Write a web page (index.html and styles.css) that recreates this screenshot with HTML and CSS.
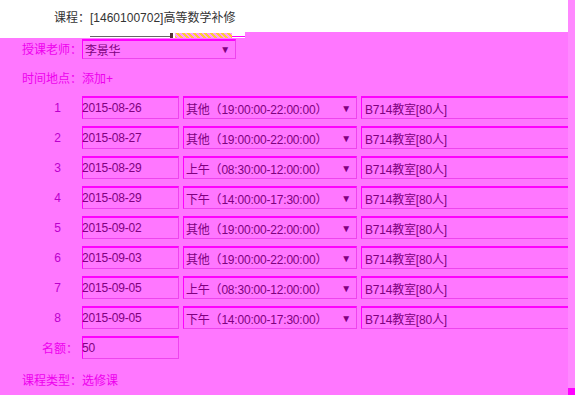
FILE: index.html
```html
<!DOCTYPE html>
<html lang="zh-CN">
<head>
  <meta charset="UTF-8">
  <title>课程</title>
  <link rel="stylesheet" href="styles.css">
</head>
<body>
  <div class="frame">
    <main class="page">
      <!-- 课程名称 -->
      <div class="course-head">课程：[1460100702]高等数学补修</div>
      <div class="head-edge">
        <div class="edge-white">
          <span class="edge-line"></span><span class="edge-icon"></span><span class="edge-check"></span><span class="edge-pink"></span>
        </div>
      </div>

      <div class="field">
        <span class="label">授课老师：</span>
        <div class="box select teacher">李景华<span class="arrow">▼</span></div>
      </div>

      <div class="field text-row">
        <span class="label">时间地点：</span><span class="link">添加+</span>
      </div>

      <div class="sessions">
        <div class="session"><span class="num">1</span><div class="box date">2015-08-26</div><div class="box select time">其他（19:00:00-22:00:00）<span class="arrow">▼</span></div><div class="box place">B714教室[80人]</div></div>
        <div class="session"><span class="num">2</span><div class="box date">2015-08-27</div><div class="box select time">其他（19:00:00-22:00:00）<span class="arrow">▼</span></div><div class="box place">B714教室[80人]</div></div>
        <div class="session"><span class="num">3</span><div class="box date">2015-08-29</div><div class="box select time">上午（08:30:00-12:00:00）<span class="arrow">▼</span></div><div class="box place">B714教室[80人]</div></div>
        <div class="session"><span class="num">4</span><div class="box date">2015-08-29</div><div class="box select time">下午（14:00:00-17:30:00）<span class="arrow">▼</span></div><div class="box place">B714教室[80人]</div></div>
        <div class="session"><span class="num">5</span><div class="box date">2015-09-02</div><div class="box select time">其他（19:00:00-22:00:00）<span class="arrow">▼</span></div><div class="box place">B714教室[80人]</div></div>
        <div class="session"><span class="num">6</span><div class="box date">2015-09-03</div><div class="box select time">其他（19:00:00-22:00:00）<span class="arrow">▼</span></div><div class="box place">B714教室[80人]</div></div>
        <div class="session"><span class="num">7</span><div class="box date">2015-09-05</div><div class="box select time">上午（08:30:00-12:00:00）<span class="arrow">▼</span></div><div class="box place">B714教室[80人]</div></div>
        <div class="session"><span class="num">8</span><div class="box date">2015-09-05</div><div class="box select time">下午（14:00:00-17:30:00）<span class="arrow">▼</span></div><div class="box place">B714教室[80人]</div></div>
        <div class="session quota"><span class="num">名额：</span><div class="box date">50</div></div>
      </div>

      <div class="field text-row last">
        <span class="label">课程类型：</span><span class="link">选修课</span>
      </div>
    </main>
    <div class="scroll-side"><span class="corner"></span></div>
  </div>
</body>
</html>
```

FILE: styles.css
```css
/* General */
body {
  margin: 0;
  padding: 0;
  font-family: "Liberation Sans", "Noto Sans CJK SC", sans-serif;
  font-size: 12px;
  background-color: #ff88ff;
  overflow: hidden;
}

.frame {
  display: flex;
  height: 395px;
}

.page {
  width: 568px;
  flex: none;
  background-color: #ff77ff;
  overflow: hidden;
}

/* Header */
.course-head {
  background-color: #fff;
  height: 32px;
  line-height: 14px;
  padding-top: 11px;
  padding-left: 54px;
  box-sizing: border-box;
  color: #333;
}

.head-edge {
  height: 6px;
}

.edge-white {
  width: 245px;
  height: 6px;
  background-color: #fff;
  display: flex;
  align-items: center;
  padding-left: 90px;
  box-sizing: border-box;
}

.edge-line {
  width: 80px;
  height: 1px;
  margin-top: 2px;
  background-color: #666;
}

.edge-icon {
  width: 3px;
  height: 5px;
  background-color: #553333;
  margin-right: 2px;
}

.edge-check {
  width: 57px;
  height: 5px;
  background: repeating-linear-gradient(45deg, #ffcc33 0 2px, #ff99ff 2px 4px);
}

.edge-pink {
  width: 13px;
  height: 1px;
  margin-top: 2px;
  background-color: #ff00ff;
}

/* Fields */
.field {
  display: flex;
  align-items: center;
  padding-left: 22px;
  color: #ee00ee;
}

.label {
  width: 60px;
  white-space: nowrap;
}

.field .box {
  margin-top: 1px;
}

.text-row {
  height: 20px;
  margin-top: 8px;
}

.text-row.last {
  margin-top: 10px;
}

.link {
  color: #ee00ee;
}

/* Boxes */
.box {
  flex: none;
  height: 23px;
  box-sizing: border-box;
  border: 1px solid #ee44ee;
  border-top: 2px solid #ff00ff;
  border-left-color: #ff00ff;
  color: #800080;
  display: flex;
  align-items: center;
  white-space: nowrap;
  letter-spacing: -0.2px;
}

.select {
  position: relative;
  padding-left: 2px;
}

.teacher {
  width: 154px;
  height: 20px;
}

.arrow {
  position: absolute;
  right: 5px;
  font-size: 10px;
  color: #800080;
}

/* Sessions */
.sessions {
  margin-top: 9px;
  display: flex;
  flex-direction: column;
  gap: 7px;
}

.session {
  display: flex;
  align-items: center;
  gap: 4px;
}

.num {
  flex: none;
  width: 78px;
  text-align: right;
  padding-right: 17px;
  box-sizing: border-box;
  color: #bb00cc;
}

.quota .num {
  color: #ee00ee;
  padding-right: 0;
}

.date {
  width: 97px;
  padding-left: 0;
  text-indent: -1px;
}

.time {
  width: 174px;
}

.place {
  width: 212px;
  padding-left: 3px;
  border-right: none;
}

/* Scroll side */
.scroll-side {
  flex: 1;
  display: flex;
  align-items: flex-end;
}

.corner {
  width: 7px;
  height: 7px;
  background-color: #ff00ff;
}
```
